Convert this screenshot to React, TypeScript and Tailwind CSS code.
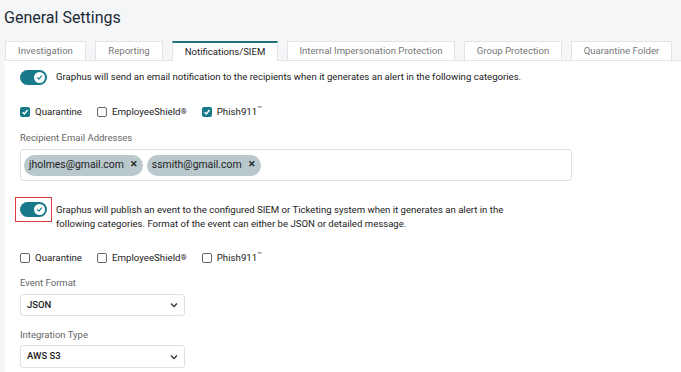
import React from "react";

const Toggle = () => (
  <div className="relative w-[27px] h-[15px] rounded-full bg-[#17798a] shrink-0">
    <div className="absolute right-[2px] top-[2px] w-[11px] h-[11px] rounded-full bg-white flex items-center justify-center">
      <svg width="7" height="7" viewBox="0 0 10 10">
        <path d="M2 5.2 L4.2 7.2 L8 2.8" fill="none" stroke="#17798a" strokeWidth="1.6" strokeLinecap="round" strokeLinejoin="round" />
      </svg>
    </div>
  </div>
);

const Check = ({ checked, label, sup, supClass }: { checked: boolean; label: string; sup?: string; supClass?: string }) => (
  <div className="flex items-center mr-[15px]">
    <div
      className={
        checked
          ? "w-[10px] h-[10px] rounded-[2px] bg-[#17798a] flex items-center justify-center"
          : "w-[10px] h-[10px] rounded-[2px] border border-[#666] bg-white"
      }
    >
      {checked && (
        <svg width="8" height="8" viewBox="0 0 10 10">
          <path d="M2 5.2 L4.2 7.4 L8.2 2.6" fill="none" stroke="white" strokeWidth="1.8" />
        </svg>
      )}
    </div>
    <span className="ml-[5px] text-[9.7px] text-[#222]">
      {label}
      {sup && <sup className={supClass}>{sup}</sup>}
    </span>
  </div>
);

const Chip = ({ text }: { text: string }) => (
  <div className="h-[21px] rounded-full bg-[#b9c8cd] flex items-center pl-[5px] pr-[5px] text-[10.4px] text-[#222]">
    {text}
    <span className="ml-[6px] text-[9px] font-bold">✕</span>
  </div>
);

const Select = ({ value, h }: { value: string; h: string }) => (
  <div className={`w-[165px] ${h} border border-[#e0e0e0] rounded-[3px] flex items-center justify-between px-[6px] bg-white`}>
    <span className="text-[9.5px] font-medium text-[#222]">{value}</span>
    <svg width="8" height="6" viewBox="0 0 8 6">
      <path d="M1 1.5 L4 4.5 L7 1.5" fill="none" stroke="#333" strokeWidth="1.3" />
    </svg>
  </div>
);

const tabs = [
  { t: "Investigation", w: "w-[81px]" },
  { t: "Reporting", w: "w-[68px]" },
  { t: "Notifications/SIEM", w: "w-[106px]", active: true },
  { t: "Internal Impersonation Protection", w: "w-[168px]" },
  { t: "Group Protection", w: "w-[98px]" },
  { t: "Quarantine Folder", w: "w-[101px]" },
];

const Checks = ({ a, b, c }: { a: boolean; b: boolean; c: boolean }) => (
  <div className="flex items-center h-[16px]">
    <Check checked={a} label="Quarantine" />
    <Check checked={b} label="EmployeeShield" sup="®" supClass="text-[8px] relative top-[-1px]" />
    <Check checked={c} label="Phish911" sup="™" supClass="text-[7px] relative top-[-4px]" />
  </div>
);

export default function App() {
  return (
    <div className="w-[681px] h-[372px] bg-[#f5f6f8] overflow-hidden" style={{ fontFamily: "Roboto, 'Liberation Sans', sans-serif" }}>
      <div className="pl-[4px] pt-[6px] h-[41px] text-[16px] leading-[24px] text-[#1c2a35]">General Settings</div>
      <div className="flex pl-[5px] gap-[9px] h-[19px] items-end">
        {tabs.map((tab) =>
          tab.active ? (
            <div
              key={tab.t}
              className={`${tab.w} h-[20px] bg-white border-t-2 border-t-[#1f6f7d] border-x border-x-[#e1e3e6] flex items-center justify-center text-[9.6px] text-[#222] relative top-[1px]`}
            >
              {tab.t}
            </div>
          ) : (
            <div
              key={tab.t}
              className={`${tab.w} h-[19px] bg-white border-t border-x border-[#e1e3e6] flex items-center justify-center text-[9.6px] text-[#777]`}
            >
              {tab.t}
            </div>
          )
        )}
      </div>
      <div className="ml-[5px] bg-white border-t border-[#e1e3e6] h-[320px] pl-[15px] pt-[9px]">
        <div className="flex items-center gap-[9px]">
          <Toggle />
          <span className="text-[9.6px] text-[#222]">
            Graphus will send an email notification to the recipients when it generates an alert in the following categories.
          </span>
        </div>
        <div className="mt-[19px]">
          <Checks a b={false} c />
        </div>
        <div className="mt-[12px] text-[9.5px] leading-[12px] text-[#666]">Recipient Email Addresses</div>
        <div className="mt-[5px] w-[552px] h-[32px] border border-[#e0e0e0] rounded-[3px] flex items-center gap-[4px] pl-[3px]">
          <Chip text="jholmes@gmail.com" />
          <Chip text="ssmith@gmail.com" />
        </div>
        <div className="flex items-start mt-[16px] h-[34px]">
          <div className="w-[37px] h-[25px] -ml-[5px] bg-[#e0393e] p-[1px] shrink-0">
            <div className="w-full h-full bg-white flex items-center justify-center">
              <Toggle />
            </div>
          </div>
          <div className="ml-[4px] w-[460px] text-[9.6px] leading-[14px] text-[#222] pt-[6px]">
            Graphus will publish an event to the configured SIEM or Ticketing system when it generates an alert in the following categories. Format of the event can either be JSON or detailed message.
          </div>
        </div>
        <div className="mt-[19px]">
          <Checks a={false} b={false} c={false} />
        </div>
        <div className="mt-[11px] text-[9.5px] leading-[12px] text-[#666]">Event Format</div>
        <div className="mt-[5px]">
          <Select value="JSON" h="h-[22px]" />
        </div>
        <div className="mt-[13px] text-[9.5px] leading-[12px] text-[#666]">Integration Type</div>
        <div className="mt-[4px]">
          <Select value="AWS S3" h="h-[23px]" />
        </div>
      </div>
    </div>
  );
}
